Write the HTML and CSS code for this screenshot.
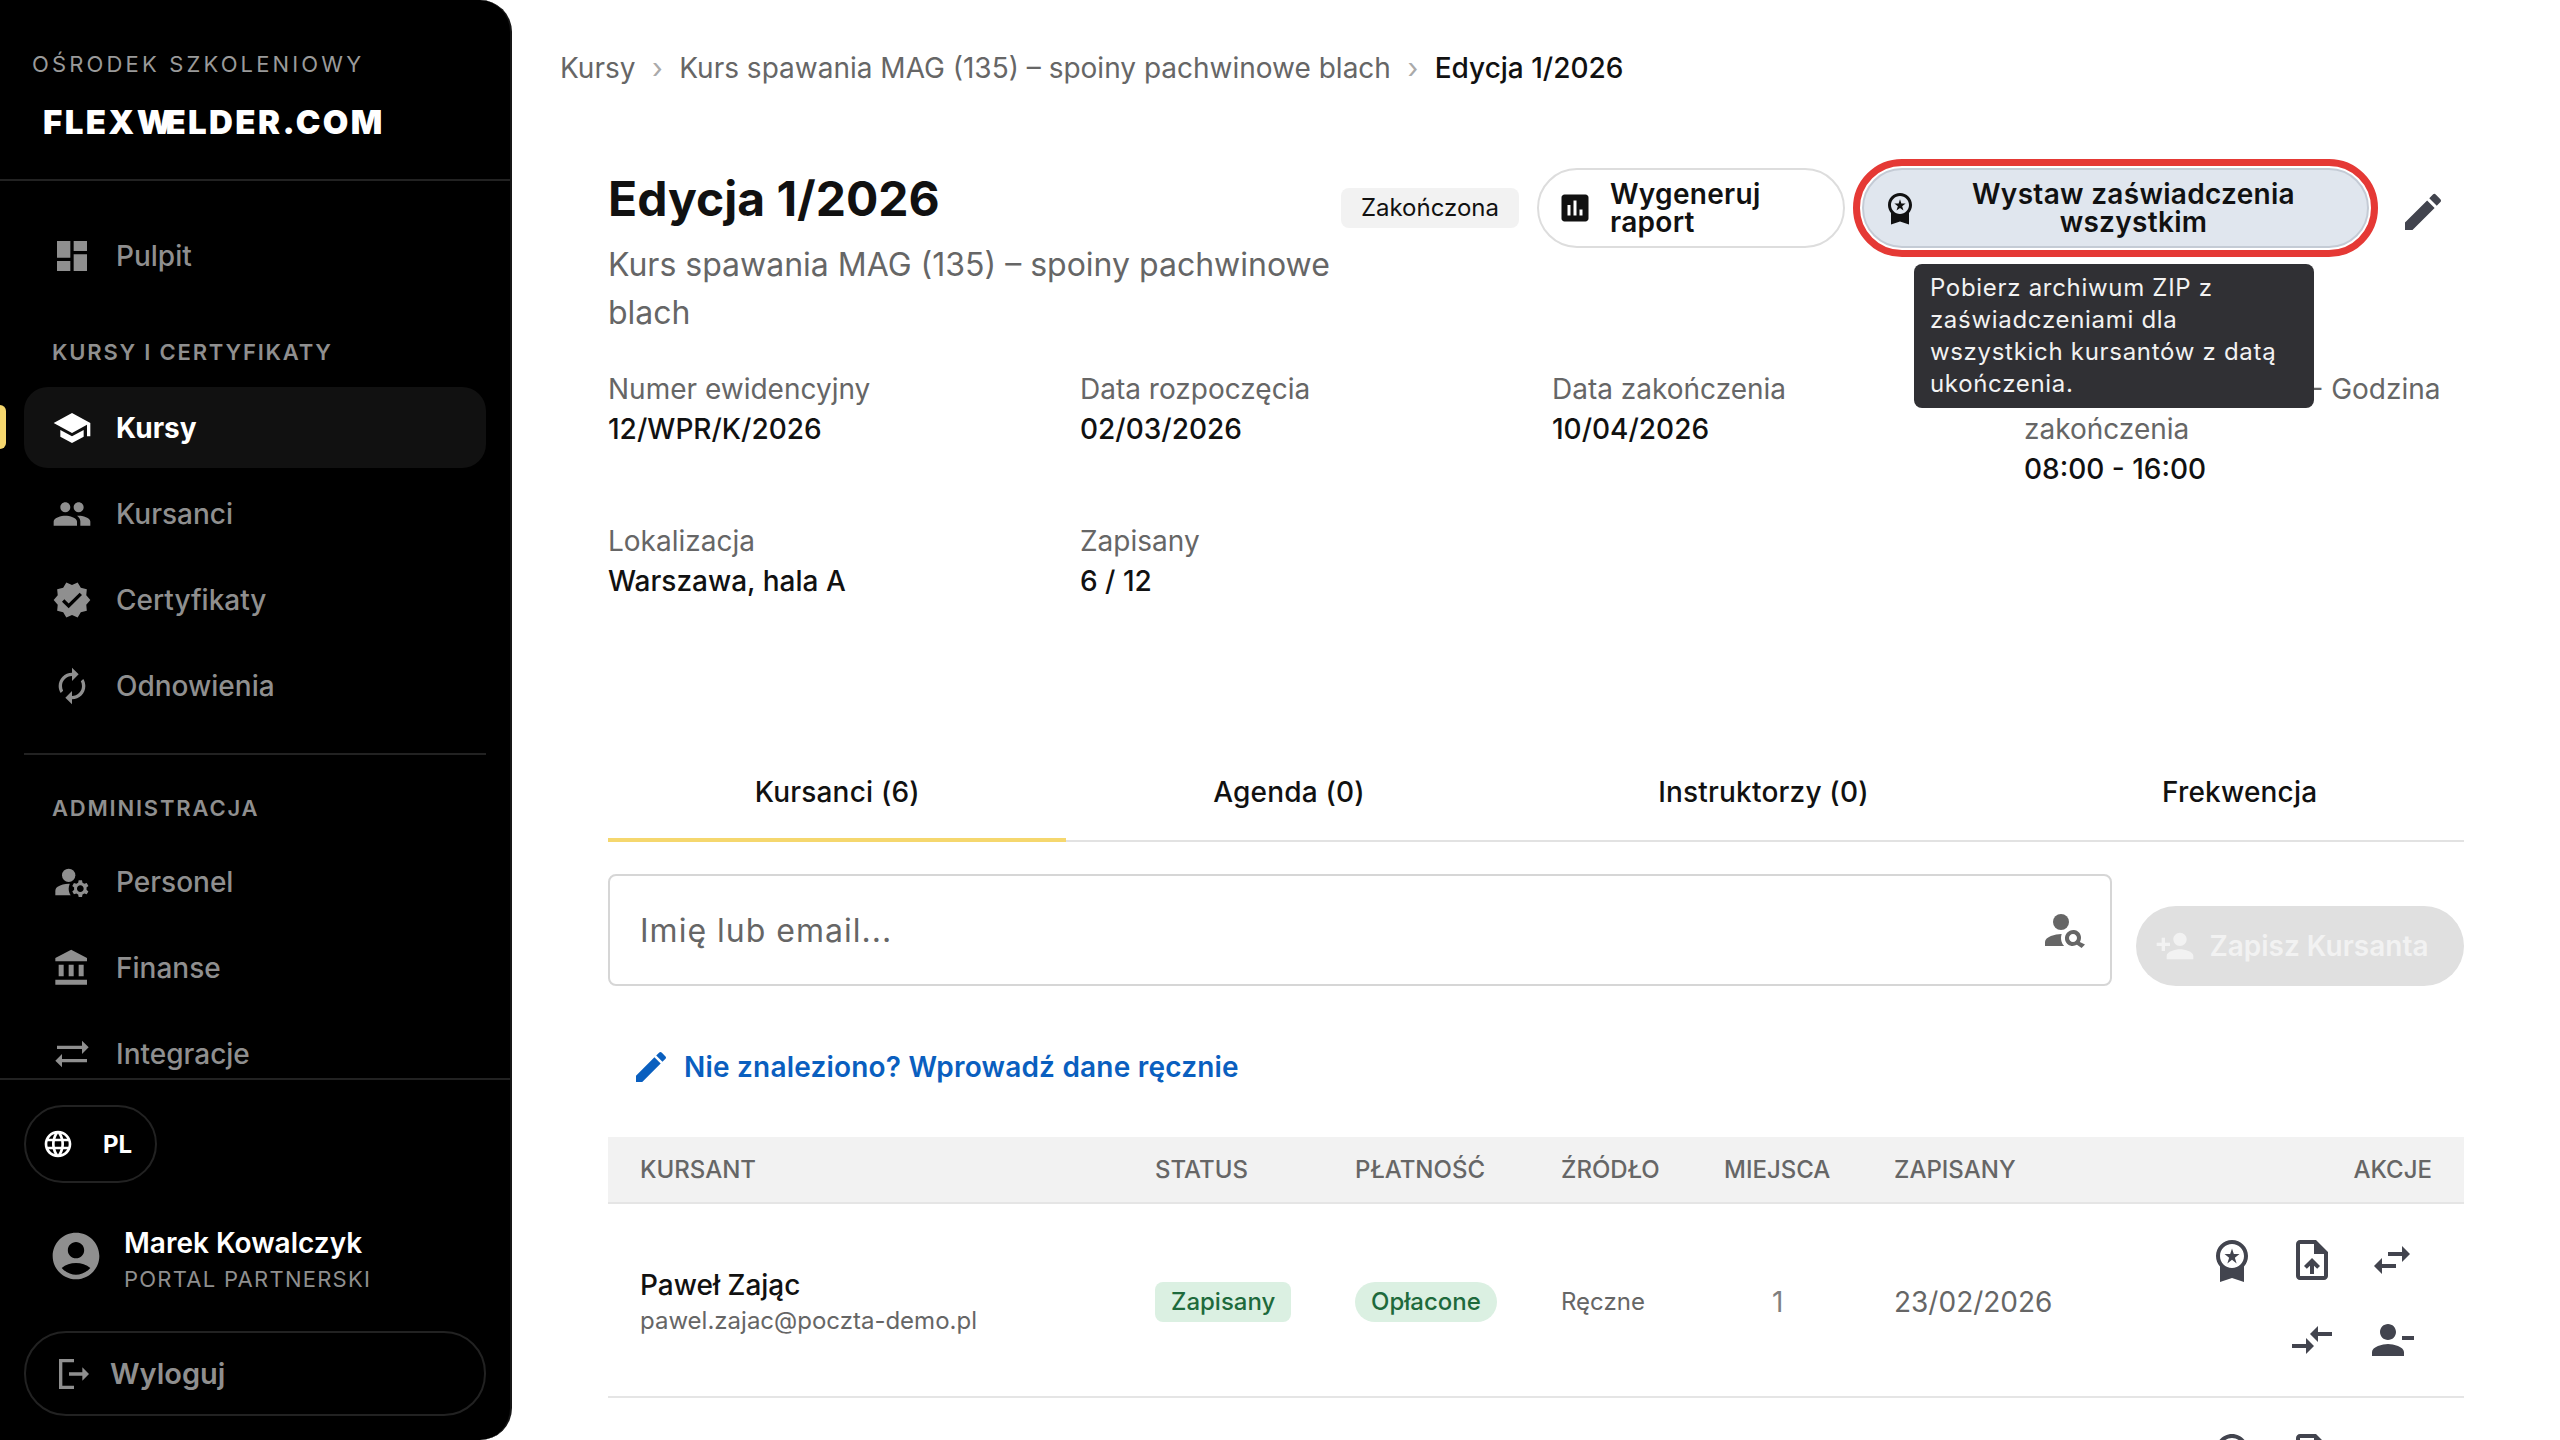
FILE: index.html
```html
<!DOCTYPE html>
<html lang="pl">
<head>
    <meta charset="UTF-8">
    <title>Edycja 1/2026</title>
    <link rel="stylesheet" href="styles.css">
</head>
<body>

<!-- Icon sprite -->
<svg class="sprite" xmlns="http://www.w3.org/2000/svg">
    <symbol id="i-dashboard" viewBox="0 0 24 24"><path d="M3 13h8V3H3v10zm0 8h8v-6H3v6zm10 0h8V11h-8v10zm0-18v6h8V3h-8z"/></symbol>
    <symbol id="i-school" viewBox="0 0 24 24"><path d="M5 13.18v4L12 21l7-3.82v-4L12 17l-7-3.82zM12 3 1 9l11 6 9-4.91V17h2V9L12 3z"/></symbol>
    <symbol id="i-people" viewBox="0 0 24 24"><path d="M16 11c1.66 0 2.99-1.34 2.99-3S17.66 5 16 5c-1.66 0-3 1.34-3 3s1.34 3 3 3zm-8 0c1.66 0 2.99-1.34 2.99-3S9.66 5 8 5C6.34 5 5 6.34 5 8s1.34 3 3 3zm0 2c-2.33 0-7 1.17-7 3.5V19h14v-2.5c0-2.33-4.67-3.5-7-3.5zm8 0c-.29 0-.62.02-.97.05 1.16.84 1.97 1.97 1.97 3.45V19h6v-2.5c0-2.33-4.67-3.5-7-3.5z"/></symbol>
    <symbol id="i-verified" viewBox="0 0 24 24"><path d="M23 12l-2.44-2.78.34-3.68-3.61-.82-1.89-3.18L12 3 8.6 1.54 6.71 4.72l-3.61.81.34 3.68L1 12l2.44 2.78-.34 3.69 3.61.82 1.89 3.18L12 21l3.4 1.46 1.89-3.18 3.61-.82-.34-3.68L23 12zm-13 5l-4-4 1.41-1.41L10 14.17l6.59-6.59L18 9l-8 8z"/></symbol>
    <symbol id="i-autorenew" viewBox="0 0 24 24"><path d="M12 6v3l4-4-4-4v3c-4.42 0-8 3.58-8 8 0 1.57.46 3.03 1.24 4.26L6.7 14.8c-.45-.83-.7-1.79-.7-2.8 0-3.31 2.69-6 6-6zm6.76 1.74L17.3 9.2c.44.84.7 1.79.7 2.8 0 3.31-2.69 6-6 6v-3l-4 4 4 4v-3c4.42 0 8-3.58 8-8 0-1.57-.46-3.03-1.24-4.26z"/></symbol>
    <symbol id="i-staff" viewBox="0 0 24 24"><circle cx="10" cy="8" r="4"/><path d="M10.67 13.02c-.22-.01-.44-.02-.67-.02-2.42 0-4.68.67-6.61 1.82-.88.52-1.39 1.5-1.39 2.53V20h9.26c-.79-1.13-1.26-2.51-1.26-4 0-1.07.25-2.07.67-2.98z"/><path d="M20.75 16c0-.22-.03-.42-.06-.63l1.14-1.01-1-1.73-1.45.49c-.32-.27-.68-.48-1.08-.63L18 11h-2l-.3 1.49c-.4.15-.76.36-1.08.63l-1.45-.49-1 1.73 1.14 1.01c-.03.21-.06.41-.06.63s.03.42.06.63l-1.14 1.01 1 1.73 1.45-.49c.32.27.68.48 1.08.63L16 21h2l.3-1.49c.4-.15.76-.36 1.08-.63l1.45.49 1-1.73-1.14-1.01c.03-.21.06-.41.06-.63zM17 18c-1.1 0-2-.9-2-2s.9-2 2-2 2 .9 2 2-.9 2-2 2z"/></symbol>
    <symbol id="i-bank" viewBox="0 0 24 24"><path d="M4 10v7h3v-7H4zm6 0v7h3v-7h-3zM2 22h19v-3H2v3zm14-12v7h3v-7h-3zm-4.5-9L2 6v2h19V6l-9.5-5z"/></symbol>
    <symbol id="i-sync" viewBox="0 0 24 24"><path d="M22 8l-4-4v3H3v2h15v3l4-4zM2 16l4 4v-3h15v-2H6v-3l-4 4z"/></symbol>
    <symbol id="i-language" viewBox="0 0 24 24"><path d="M11.99 2C6.47 2 2 6.48 2 12s4.47 10 9.99 10C17.52 22 22 17.52 22 12S17.52 2 11.99 2zm6.93 6h-2.95c-.32-1.25-.78-2.45-1.38-3.56 1.84.63 3.37 1.91 4.33 3.56zM12 4.04c.83 1.2 1.48 2.53 1.91 3.96h-3.82c.43-1.43 1.08-2.76 1.91-3.96zM4.26 14C4.1 13.36 4 12.69 4 12s.1-1.36.26-2h3.38c-.08.66-.14 1.32-.14 2 0 .68.06 1.34.14 2H4.26zm.82 2h2.95c.32 1.25.78 2.45 1.38 3.56-1.84-.63-3.37-1.9-4.33-3.56zm2.95-8H5.08c.96-1.66 2.49-2.93 4.33-3.56C8.81 5.55 8.35 6.75 8.03 8zM12 19.96c-.83-1.2-1.48-2.53-1.91-3.96h3.82c-.43 1.43-1.08 2.76-1.91 3.96zM14.34 14H9.66c-.09-.66-.16-1.32-.16-2 0-.68.07-1.35.16-2h4.68c.09.65.16 1.32.16 2 0 .68-.07 1.34-.16 2zm.25 5.56c.6-1.11 1.06-2.31 1.38-3.56h2.95c-.96 1.65-2.49 2.93-4.33 3.56zM16.36 14c.08-.66.14-1.32.14-2 0-.68-.06-1.34-.14-2h3.38c.16.64.26 1.31.26 2s-.1 1.36-.26 2h-3.38z"/></symbol>
    <symbol id="i-account" viewBox="0 0 24 24"><path d="M12 2C6.48 2 2 6.48 2 12s4.48 10 10 10 10-4.48 10-10S17.52 2 12 2zm0 4c1.93 0 3.5 1.57 3.5 3.5S13.93 13 12 13s-3.5-1.57-3.5-3.5S10.07 6 12 6zm0 14c-2.03 0-4.43-.82-6.14-2.88C7.55 15.8 9.68 15 12 15s4.45.8 6.14 2.12C16.43 19.18 14.03 20 12 20z"/></symbol>
    <symbol id="i-logout" viewBox="0 0 24 24"><path d="M5 5h7V3H3v18h9v-2H5zm16 7-4-4v3H9v2h8v3z"/></symbol>
    <symbol id="i-report" viewBox="0 0 24 24"><path d="M19 3H5c-1.1 0-2 .9-2 2v14c0 1.1.9 2 2 2h14c1.1 0 2-.9 2-2V5c0-1.1-.9-2-2-2zM9 17H7v-7h2v7zm4 0h-2V7h2v10zm4 0h-2v-4h2v4z"/></symbol>
    <symbol id="i-premium" viewBox="0 0 24 24"><path d="M9.68 13.69 12 11.93l2.31 1.76-.88-2.85L15.75 9h-2.84L12 6.19 11.09 9H8.25l2.31 1.84-.88 2.85zM20 10c0-4.42-3.58-8-8-8s-8 3.58-8 8c0 2.03.76 3.87 2 5.28V23l6-2 6 2v-7.72c1.24-1.41 2-3.25 2-5.28zm-8-6c3.31 0 6 2.69 6 6s-2.69 6-6 6-6-2.69-6-6 2.69-6 6-6z"/></symbol>
    <symbol id="i-edit" viewBox="0 0 24 24"><path d="M3 17.25V21h3.75L17.81 9.94l-3.75-3.75L3 17.25zM20.71 7.04c.39-.39.39-1.02 0-1.41l-2.34-2.34a.9959.9959 0 0 0-1.41 0l-1.83 1.83 3.75 3.75 1.83-1.83z"/></symbol>
    <symbol id="i-person-search" viewBox="0 0 24 24"><circle cx="10" cy="8" r="4"/><path d="M10.35 14.01C7.62 13.91 2 15.27 2 18v2h9.54c-2.47-2.76-1.23-5.89-1.19-5.99z"/><path d="M19.43 18.02c.47-.8.7-1.77.5-2.86-.31-1.69-1.73-3.03-3.43-3.12-2.72-.16-4.83 2.05-4.48 4.71.23 1.62 1.54 2.94 3.16 3.19.99.15 1.97-.05 2.78-.51L20.29 21 22 19.3l-2.57-1.28zM16 18c-1.1 0-2-.9-2-2s.9-2 2-2 2 .9 2 2-.9 2-2 2z"/></symbol>
    <symbol id="i-person-add" viewBox="0 0 24 24"><path d="M15 12c2.21 0 4-1.79 4-4s-1.79-4-4-4-4 1.79-4 4 1.79 4 4 4zm-9-2V7H4v3H1v2h3v3h2v-3h3v-2H6zm9 4c-2.67 0-8 1.34-8 4v2h16v-2c0-2.66-5.33-4-8-4z"/></symbol>
    <symbol id="i-upload" viewBox="0 0 24 24"><path d="M14 2H6c-1.1 0-1.99.9-1.99 2L4 20c0 1.1.89 2 1.99 2H18c1.1 0 2-.9 2-2V8l-6-6zm4 18H6V4h7v5h5v11zM8 15.01l1.41 1.41L11 14.84V19h2v-4.16l1.59 1.59L16 15.01 12.01 11 8 15.01z"/></symbol>
    <symbol id="i-swap" viewBox="0 0 24 24"><path d="M6.99 11L3 15l3.99 4v-3H14v-2H6.99v-3zM21 9l-3.99-4v3H10v2h7.01v3L21 9z"/></symbol>
    <symbol id="i-compare" viewBox="0 0 24 24"><path d="M9.01 14H2v2h7.01v3L13 15l-3.99-4v3zm5.98-1v-3H22V8h-7.01V5L11 9l3.99 4z"/></symbol>
    <symbol id="i-person-remove" viewBox="0 0 24 24"><path d="M14 8c0-2.21-1.79-4-4-4S6 5.79 6 8s1.79 4 4 4 4-1.79 4-4zm3 2v2h6v-2h-6zM2 18v2h16v-2c0-2.66-5.33-4-8-4s-8 1.34-8 4z"/></symbol>
</svg>

<div class="layout">

    <!-- Sidebar -->
    <aside class="sidebar">
        <div class="brand">
            <div class="brand-label">OŚRODEK SZKOLENIOWY</div>
            <div class="brand-logo">FLEX<span class="logo-tight">W</span>ELDER.COM</div>
        </div>

        <nav class="nav">
            <a class="nav-item"><svg class="nav-icon"><use href="#i-dashboard"/></svg>Pulpit</a>
            <div class="nav-title first">KURSY I CERTYFIKATY</div>
            <a class="nav-item active"><svg class="nav-icon"><use href="#i-school"/></svg>Kursy</a>
            <a class="nav-item"><svg class="nav-icon"><use href="#i-people"/></svg>Kursanci</a>
            <a class="nav-item"><svg class="nav-icon"><use href="#i-verified"/></svg>Certyfikaty</a>
            <a class="nav-item"><svg class="nav-icon"><use href="#i-autorenew"/></svg>Odnowienia</a>
            <div class="nav-divider"></div>
            <div class="nav-title">ADMINISTRACJA</div>
            <a class="nav-item"><svg class="nav-icon"><use href="#i-staff"/></svg>Personel</a>
            <a class="nav-item"><svg class="nav-icon"><use href="#i-bank"/></svg>Finanse</a>
            <a class="nav-item"><svg class="nav-icon"><use href="#i-sync"/></svg>Integracje</a>
        </nav>

        <div class="sidebar-footer">
            <button class="lang-button"><svg class="lang-icon"><use href="#i-language"/></svg>PL</button>
            <div class="user">
                <svg class="user-icon"><use href="#i-account"/></svg>
                <div class="user-text">
                    <div class="user-name">Marek Kowalczyk</div>
                    <div class="user-role">PORTAL PARTNERSKI</div>
                </div>
            </div>
            <button class="logout-button"><svg class="logout-icon"><use href="#i-logout"/></svg>Wyloguj</button>
        </div>
    </aside>

    <!-- Main content -->
    <main class="main">
        <div class="breadcrumb">
            <span>Kursy</span><span class="crumb-sep">›</span>
            <span>Kurs spawania MAG (135) – spoiny pachwinowe blach</span><span class="crumb-sep">›</span>
            <span class="crumb-current">Edycja 1/2026</span>
        </div>

        <section class="edition">
            <div class="edition-head">
                <div class="edition-title">
                    <h1>Edycja 1/2026</h1>
                    <p>Kurs spawania MAG (135) – spoiny pachwinowe blach</p>
                </div>
                <div class="edition-actions">
                    <span class="chip-finished">Zakończona</span>
                    <button class="action-button report"><svg class="button-icon"><use href="#i-report"/></svg><span>Wygeneruj raport</span></button>
                    <button class="action-button certify"><svg class="button-icon"><use href="#i-premium"/></svg><span>Wystaw zaświadczenia wszystkim</span></button>
                    <svg class="edit-icon"><use href="#i-edit"/></svg>
                    <div class="tooltip">Pobierz archiwum ZIP z zaświadczeniami dla wszystkich kursantów z datą ukończenia.</div>
                </div>
            </div>

            <div class="facts">
                <div><div class="fact-label">Numer ewidencyjny</div><div class="fact-value">12/WPR/K/2026</div></div>
                <div><div class="fact-label">Data rozpoczęcia</div><div class="fact-value">02/03/2026</div></div>
                <div><div class="fact-label">Data zakończenia</div><div class="fact-value">10/04/2026</div></div>
                <div><div class="fact-label">Godzina rozpoczęcia - Godzina zakończenia</div><div class="fact-value">08:00 - 16:00</div></div>
                <div><div class="fact-label">Lokalizacja</div><div class="fact-value">Warszawa, hala A</div></div>
                <div><div class="fact-label">Zapisany</div><div class="fact-value">6 / 12</div></div>
            </div>

            <div class="tabs">
                <div class="tab active">Kursanci (6)</div>
                <div class="tab">Agenda (0)</div>
                <div class="tab">Instruktorzy (0)</div>
                <div class="tab">Frekwencja</div>
            </div>

            <div class="enroll">
                <div class="search-box">
                    <span class="search-placeholder">Imię lub email...</span>
                    <svg class="search-icon"><use href="#i-person-search"/></svg>
                </div>
                <button class="enroll-button"><svg class="enroll-icon"><use href="#i-person-add"/></svg>Zapisz Kursanta</button>
            </div>

            <a class="manual-link"><svg class="manual-icon"><use href="#i-edit"/></svg>Nie znaleziono? Wprowadź dane ręcznie</a>

            <table class="students">
                <colgroup>
                    <col class="col-student"><col class="col-status"><col class="col-payment"><col class="col-source"><col class="col-seats"><col class="col-date"><col>
                </colgroup>
                <thead>
                    <tr>
                        <th>KURSANT</th>
                        <th>STATUS</th>
                        <th>PŁATNOŚĆ</th>
                        <th>ŹRÓDŁO</th>
                        <th>MIEJSCA</th>
                        <th>ZAPISANY</th>
                        <th class="th-actions">AKCJE</th>
                    </tr>
                </thead>
                <tbody>
                    <tr>
                        <td>
                            <div class="student-name">Paweł Zając</div>
                            <div class="student-email">pawel.zajac@poczta-demo.pl</div>
                        </td>
                        <td><span class="badge">Zapisany</span></td>
                        <td><span class="badge pill">Opłacone</span></td>
                        <td class="cell-source">Ręczne</td>
                        <td class="cell-seats">1</td>
                        <td class="cell-date">23/02/2026</td>
                        <td class="cell-actions">
                            <div class="row-actions">
                                <svg class="row-icon"><use href="#i-premium"/></svg>
                                <svg class="row-icon"><use href="#i-upload"/></svg>
                                <svg class="row-icon"><use href="#i-swap"/></svg>
                                <svg class="row-icon"><use href="#i-compare"/></svg>
                                <svg class="row-icon"><use href="#i-person-remove"/></svg>
                            </div>
                        </td>
                    </tr>
                    <tr>
                        <td colspan="6"></td>
                        <td class="cell-actions">
                            <div class="row-actions">
                                <svg class="row-icon"><use href="#i-premium"/></svg>
                                <svg class="row-icon"><use href="#i-upload"/></svg>
                                <svg class="row-icon"><use href="#i-swap"/></svg>
                            </div>
                        </td>
                    </tr>
                </tbody>
            </table>
        </section>
    </main>
</div>

</body>
</html>
```

FILE: styles.css
```css
/* Basic styling */
* {
    box-sizing: border-box;
}
html, body {
    margin: 0;
    height: 100%;
    overflow: hidden;
}
body {
    font-family: Inter, "Noto Sans", sans-serif;
    font-size: 28px;
    color: #111;
    background: #fff;
}
button {
    font-family: inherit;
}
svg {
    fill: currentColor;
    flex-shrink: 0;
}
.sprite {
    display: none;
}
.layout {
    display: flex;
    height: 1440px;
}

/* Sidebar */
.sidebar {
    width: 512px;
    flex-shrink: 0;
    height: 1440px;
    background: #000;
    border-right: 2px solid #161616;
    border-radius: 0 32px 32px 0;
    display: flex;
    flex-direction: column;
    color: #8f8f8f;
}
.brand {
    height: 181px;
    flex-shrink: 0;
    padding: 50px 0 0 32px;
    border-bottom: 2px solid #222;
}
.brand-label {
    font-size: 22px;
    line-height: 28px;
    letter-spacing: 3.15px;
    color: #9a9a9a;
}
.brand-logo {
    margin: 24px 0 0 11px;
    font-size: 33px;
    line-height: 40px;
    font-weight: 900;
    color: #fff;
    letter-spacing: 2.4px;
}
.logo-tight {
    letter-spacing: -7px;
}
.nav {
    flex: 1;
    min-height: 0;
    overflow: hidden;
    padding: 34px 24px 0;
}
.nav-item {
    display: flex;
    align-items: center;
    height: 81px;
    margin: 0 0 5px;
    padding-left: 28px;
    border-radius: 24px;
    font-size: 28px;
    font-weight: 500;
    position: relative;
}
.nav-item.active {
    background: #111;
    color: #fff;
    font-weight: 700;
}
.nav-item.active::before {
    content: "";
    position: absolute;
    left: -24px;
    top: 18px;
    width: 6px;
    height: 44px;
    background: #f5d76e;
    border-radius: 0 6px 6px 0;
}
.nav-icon {
    width: 40px;
    height: 40px;
    margin-right: 24px;
}
.nav-title {
    font-size: 22px;
    line-height: 28px;
    font-weight: 600;
    letter-spacing: 1.8px;
    color: #8f8f8f;
    padding-left: 28px;
    margin: 30px 0 21px;
}
.nav-title.first {
    margin-top: 42px;
    margin-bottom: 21px;
}
.nav-divider {
    height: 2px;
    background: #222;
    margin: 27px 0 0;
}
.nav-divider + .nav-title {
    margin-top: 39px;
    margin-bottom: 19px;
}
.sidebar-footer {
    flex-shrink: 0;
    height: 362px;
    border-top: 2px solid #222;
    padding: 25px 24px 0;
}
.lang-button {
    display: flex;
    align-items: center;
    width: 133px;
    height: 78px;
    padding: 0 0 0 16px;
    background: none;
    border: 2px solid #222;
    border-radius: 39px;
    color: #fff;
    font-size: 24px;
    font-weight: 700;
}
.lang-icon {
    width: 32px;
    height: 32px;
    margin-right: 29px;
}
.user {
    display: flex;
    align-items: center;
    margin: 38px 0 40px;
    padding-left: 24px;
    height: 70px;
}
.user-icon {
    width: 56px;
    height: 56px;
    margin-right: 20px;
}
.user-text {
    padding-top: 7px;
}
.user-name {
    font-size: 28px;
    line-height: 36px;
    font-weight: 600;
    color: #fff;
}
.user-role {
    margin-top: 3px;
    font-size: 22px;
    line-height: 30px;
    letter-spacing: 1.25px;
    color: #8f8f8f;
}
.logout-button {
    display: flex;
    align-items: center;
    width: 100%;
    height: 85px;
    padding: 0 0 0 28px;
    background: none;
    border: 2px solid #222;
    border-radius: 42px;
    color: #8f8f8f;
    font-size: 29px;
    font-weight: 600;
}
.logout-icon {
    width: 40px;
    height: 40px;
    margin-right: 16px;
}

/* Main */
.main {
    flex: 1;
    min-width: 0;
    padding: 0 96px 0 48px;
}
.breadcrumb {
    display: flex;
    align-items: center;
    height: 136px;
    color: #666;
    font-size: 28px;
}
.crumb-sep {
    margin: 0 16.5px;
    color: #aaa;
}
.crumb-current {
    color: #111;
    font-weight: 500;
}
.edition {
    padding-left: 48px;
}
.edition-head {
    display: flex;
    justify-content: space-between;
    align-items: flex-start;
}
.edition-title {
    width: 732px;
}
.edition-title h1 {
    margin: 33px 0 0;
    font-size: 48px;
    line-height: 60px;
    font-weight: 700;
    color: #111;
}
.edition-title p {
    margin: 12px 0 0;
    font-size: 32px;
    line-height: 48px;
    color: #666;
}
.edition-actions {
    display: flex;
    align-items: center;
    position: relative;
    margin-top: 32px;
    padding-right: 17px;
}
.chip-finished {
    height: 40px;
    line-height: 40px;
    padding: 0 20px;
    background: #f2f2f2;
    border-radius: 8px;
    font-size: 24px;
    color: #111;
    margin-right: 18px;
}
.action-button {
    display: flex;
    align-items: center;
    height: 80px;
    border-radius: 40px;
    border: 2px solid #ddd;
    background: #fff;
    color: #111;
    font-size: 28px;
    letter-spacing: .3px;
    line-height: 28px;
    font-weight: 600;
}
.action-button.report {
    width: 308px;
    padding: 0 18px;
    text-align: left;
}
.report .button-icon {
    margin-right: 17px;
}
.action-button.certify {
    width: 507px;
    margin-left: 17px;
    padding: 0 18px;
    background: #e0e6ee;
    border-color: #c4cbd5;
    outline: 7px solid #e53935;
    outline-offset: 2px;
}
.action-button span {
    flex: 1;
}
.button-icon {
    width: 36px;
    height: 36px;
}
.edit-icon {
    width: 48px;
    height: 48px;
    margin: 8px 0 0 30px;
    color: #42444e;
}
.tooltip {
    position: absolute;
    z-index: 5;
    left: 573px;
    top: 96px;
    width: 400px;
    padding: 8px 16px;
    background: #303034;
    border-radius: 8px;
    color: #f2f2f2;
    font-size: 24px;
    letter-spacing: .7px;
    line-height: 32px;
}
.facts {
    display: grid;
    grid-template-columns: repeat(4, 472px);
    row-gap: 32px;
    margin-top: 32px;
    max-width: 100%;
}
.fact-label {
    color: #666;
    line-height: 40px;
}
.fact-value {
    color: #111;
    font-weight: 500;
    line-height: 40px;
}
.tabs {
    display: flex;
    margin-top: 147px;
    border-bottom: 2px solid #e2e2e2;
}
.tab {
    flex: 1 1 auto;
    text-align: center;
    height: 94px;
    line-height: 88px;
    font-size: 28px;
    letter-spacing: .2px;
    font-weight: 500;
    margin-bottom: -2px;
}
.tab.active {
    border-bottom: 4px solid #f5d76e;
}
.enroll {
    display: flex;
    align-items: flex-end;
    gap: 24px;
    margin-top: 32px;
}
.search-box {
    flex: 1;
    height: 112px;
    display: flex;
    align-items: center;
    justify-content: space-between;
    padding: 0 21px 0 30px;
    border: 2px solid #d6d6d6;
    border-radius: 8px;
}
.search-placeholder {
    font-size: 32px;
    letter-spacing: 1px;
    color: #666;
}
.search-icon {
    width: 48px;
    height: 48px;
    color: #666;
}
.enroll-button {
    display: flex;
    align-items: center;
    justify-content: center;
    width: 328px;
    height: 80px;
    padding: 0 16px 0 0;
    border: none;
    border-radius: 40px;
    background: #e0e0e0;
    color: #f2f2f2;
    font-size: 28px;
    font-weight: 600;
}
.enroll-icon {
    width: 40px;
    height: 40px;
    margin-right: 14px;
}
.manual-link {
    display: flex;
    align-items: center;
    height: 60px;
    margin: 51px 0 40px 23px;
    color: #0a5fbf;
    font-size: 28px;
    letter-spacing: .2px;
    font-weight: 600;
}
.manual-icon {
    width: 40px;
    height: 40px;
    margin-right: 13px;
}

/* Table */
.students {
    width: 100%;
    border-collapse: collapse;
    table-layout: fixed;
}
.col-student { width: 515px; }
.col-status { width: 200px; }
.col-payment { width: 206px; }
.col-source { width: 163px; }
.col-seats { width: 170px; }
.col-date { width: 320px; }
.students th {
    height: 66px;
    background: #f2f2f2;
    border-bottom: 2px solid #e5e5e5;
    padding: 0 0 0 32px;
    text-align: left;
    font-size: 24px;
    font-weight: 500;
    color: #666;
}
.students .th-actions {
    text-align: right;
    padding: 0 32px 0 0;
}
.students td {
    padding: 19px 0 16px 32px;
    border-bottom: 2px solid #e5e5e5;
    vertical-align: middle;
}
.student-name {
    font-size: 28px;
    line-height: 36px;
    font-weight: 500;
}
.student-email {
    margin-top: 2px;
    font-size: 24px;
    line-height: 32px;
    color: #666;
}
.badge {
    display: inline-block;
    height: 40px;
    line-height: 40px;
    padding: 0 16px;
    background: #dbf0e2;
    border-radius: 8px;
    color: #1e6a3c;
    font-size: 24px;
    font-weight: 500;
}
.badge.pill {
    border-radius: 20px;
}
.cell-source {
    font-size: 24px;
    color: #666;
}
.cell-seats {
    font-size: 28px;
    color: #808080;
}
.students td.cell-seats {
    padding-left: 80px;
}
.cell-date {
    font-size: 28px;
    color: #666;
}
.students td.cell-actions {
    padding: 16px 32px 16px 0;
}
.row-actions {
    display: flex;
    flex-wrap: wrap;
    justify-content: flex-end;
    width: 240px;
    margin-left: auto;
}
.row-icon {
    width: 48px;
    height: 48px;
    margin: 16px;
    color: #42444e;
}
```
